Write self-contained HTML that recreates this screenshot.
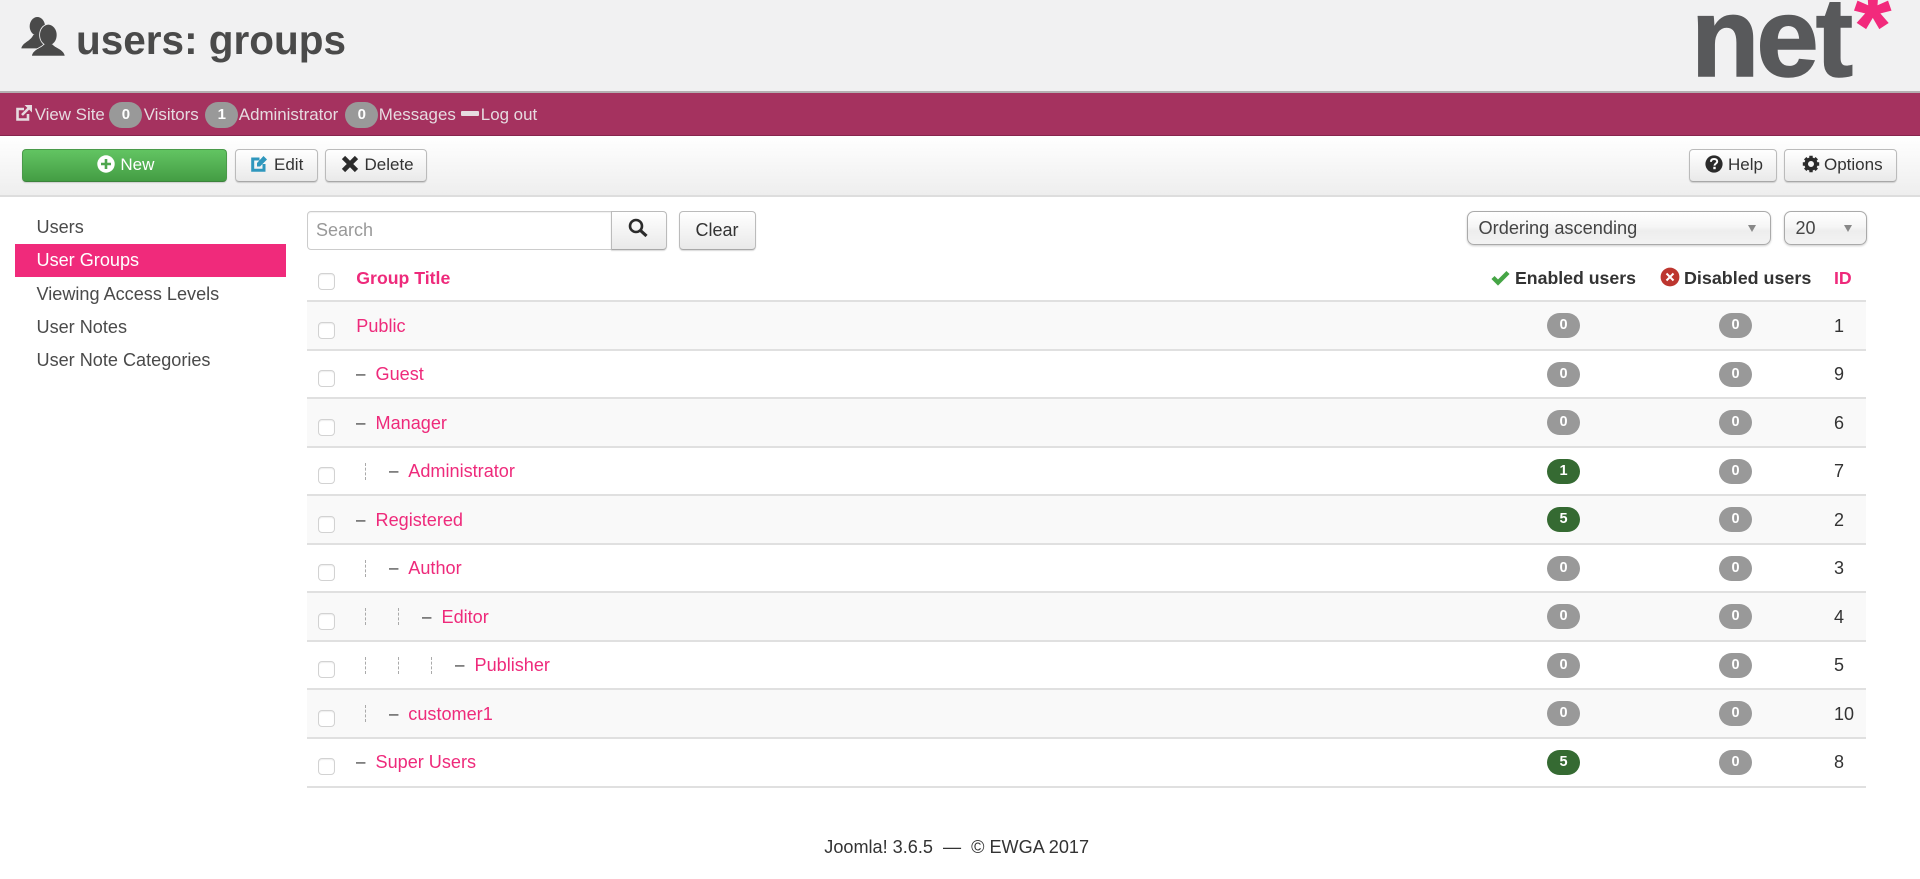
<!DOCTYPE html>
<html><head><meta charset="utf-8"><title>users: groups</title>
<style>
*{box-sizing:border-box}
html,body{margin:0;padding:0;width:1920px;height:879px;overflow:hidden;background:#fff;font-family:"Liberation Sans",sans-serif;font-size:17px;color:#333}
.a{position:absolute}
.t{position:absolute;white-space:nowrap;line-height:20px;height:20px}
#head{left:0;top:0;width:1920px;height:92px;background:#f1f1f2}
#bar{left:0;top:91px;width:1920px;height:45px;background:#a5325f;border-top:2px solid #b5b0b2;border-bottom:1px solid #87254d}
#tool{left:0;top:136px;width:1920px;height:61px;background:linear-gradient(#fff,#eee);border-bottom:2px solid #ddd}
.nb{position:absolute;top:102px;width:33px;height:26px;border-radius:13px;background:#999;color:#fff;font-weight:bold;font-size:15px;line-height:26px;text-align:center}
.nt{color:#e6dbe0;top:105px;font-size:16.9px}
.btn{position:absolute;border:1px solid #bbb;border-bottom-color:#a8a8a8;border-radius:4px;background:linear-gradient(#fff,#e9e9e9);box-shadow:0 1px 1px rgba(0,0,0,.15)}
.side{left:36.5px;color:#4a4a4a;font-size:18.1px}
.row{position:absolute;left:307px;width:1559px;height:48.5px;border-bottom:2px solid #e0e0e0}
.row.o{background:#f9f9f9}
.row .cb{position:absolute;left:11px;top:19.5px;width:16.5px;height:17px;border:1px solid #d2d2d2;border-radius:4px;background:#fff;box-shadow:inset 0 1px 1px rgba(0,0,0,.07)}
.row .b{position:absolute;top:11px;width:33px;height:25px;border-radius:12.5px;background:#999;color:#fff;font-weight:bold;font-size:14.5px;line-height:25px;text-align:center}
.row .b.g{background:#356a32}
.row .b1{left:1240px}.row .b2{left:1412px}
.row .n{position:absolute;top:13.5px;line-height:20px;color:#ee2a7b;white-space:nowrap;font-size:18.1px}
.row .d{position:absolute;top:13.5px;line-height:20px;color:#333}
.row .id{position:absolute;left:1527px;top:13.5px;line-height:20px;color:#333;font-size:18px}
.row .l{position:absolute;top:15px;height:17px;width:0;border-left:1px dashed #aaa}
.sel{position:absolute;top:211px;height:34px;border:1px solid #aaa;border-radius:7px;background:linear-gradient(#fff 0%,#f6f6f6 45%,#ededed 60%,#f3f3f3 100%);box-shadow:0 1px 2px rgba(0,0,0,.2)}
.arr{position:absolute;top:225px;width:0;height:0;border-left:4.5px solid transparent;border-right:4.5px solid transparent;border-top:7px solid #888}
svg{position:absolute;overflow:visible}
</style></head><body>
<div class="a" id="head"></div>
<svg style="left:10px;top:5px" width="100" height="70" viewBox="0 0 300 210">
<g fill="#4a4a4a"><ellipse cx="82" cy="64" rx="23" ry="28"/><path d="M34 130C38 112 60 110 70 90L94 90L104 130Z"/>
<g stroke="#f1f1f2" stroke-width="5" style="paint-order:stroke"><path d="M103 118C94 130 70 133 66 152L164 152C160 133 136 130 127 118Z"/><ellipse cx="115" cy="90" rx="25" ry="31"/></g>
<path d="M103 118C94 130 70 133 66 152L164 152C160 133 136 130 127 118Z"/></g></svg>
<div class="t" style="left:76px;top:16px;font-size:40.5px;font-weight:bold;line-height:48px;height:48px;color:#4a4a4a">users: groups</div>
<div class="t" style="left:1691px;top:-18px;font-size:112px;font-weight:bold;line-height:112px;height:112px;letter-spacing:-3px;color:#58595b;-webkit-text-stroke:1.5px #58595b">net</div>
<div class="t" style="left:1854.4px;top:-21px;font-size:94px;font-weight:bold;line-height:94px;height:94px;color:#f22a7c;-webkit-text-stroke:1px #f22a7c">*</div>

<div class="a" id="bar"></div>
<svg style="left:16px;top:105px" width="16" height="16" viewBox="0 0 16 16" fill="none" stroke="#e6dbe0" stroke-width="2.6"><path d="M8 4H1.5V14.5H12V9"/><path d="M6 10L14 2" /><path fill="#e6dbe0" stroke="none" d="M8.5 0H16V7.5Z"/></svg>
<div class="t nt" style="left:34.7px">View Site</div>
<div class="nb" style="left:109.4px">0</div>
<div class="t nt" style="left:143.7px">Visitors</div>
<div class="nb" style="left:205.3px">1</div>
<div class="t nt" style="left:238.8px">Administrator</div>
<div class="nb" style="left:345.3px">0</div>
<div class="t nt" style="left:378.8px">Messages</div>
<div class="a" style="left:461px;top:111px;width:17.5px;height:4.5px;background:#e6dbe0;border-radius:1px"></div>
<div class="t nt" style="left:480.8px">Log out</div>

<div class="a" id="tool"></div>
<div class="btn" style="left:22.4px;top:149px;width:205px;height:33px;background:linear-gradient(#62c462,#449d44);border-color:#4a9a4a #4a9a4a #3c833c"></div>
<svg style="left:97px;top:155px" width="18" height="18" viewBox="0 0 18 18"><circle cx="9" cy="9" r="8.7" fill="#fff"/><path d="M9 4V14M4 9H14" stroke="#4fa64f" stroke-width="2.6"/></svg>
<div class="t" style="left:120.4px;top:155px;color:#fff">New</div>
<div class="btn" style="left:234.7px;top:149px;width:83px;height:33px"></div>
<svg style="left:251px;top:155px" width="17" height="17" viewBox="0 0 17 17"><path d="M8.5 4H1.7V15.3H13V9" fill="none" stroke="#2f97bd" stroke-width="3"/><path d="M6 8L12.5 1L16 4.5L9 11.5H6Z" fill="#2f97bd"/></svg>
<div class="t" style="left:274px;top:155px">Edit</div>
<div class="btn" style="left:325px;top:149px;width:102px;height:33px"></div>
<svg style="left:341px;top:155px" width="18" height="18" viewBox="0 0 18 18"><path d="M2.5 2.5L15.5 15.5M15.5 2.5L2.5 15.5" stroke="#2b2b2b" stroke-width="4.6"/></svg>
<div class="t" style="left:364.5px;top:155px">Delete</div>
<div class="btn" style="left:1688.7px;top:149px;width:88px;height:33px"></div>
<svg style="left:1705px;top:155px" width="18" height="18" viewBox="0 0 18 18"><circle cx="9" cy="9" r="8.6" fill="#2b2b2b"/><path d="M5.9 6.8C6 4.9 7.3 4 9.1 4C11 4 12.2 5 12.2 6.6C12.2 8.6 9.5 8.6 9.5 10.6" fill="none" stroke="#fff" stroke-width="2"/><rect x="8.3" y="11.8" width="2.4" height="2.4" fill="#fff"/></svg>
<div class="t" style="left:1728px;top:155px">Help</div>
<div class="btn" style="left:1784px;top:149px;width:113px;height:33px"></div>
<svg style="left:1801.5px;top:155px" width="18" height="18" viewBox="0 0 18 18"><circle cx="9" cy="9" r="4.8" fill="none" stroke="#2b2b2b" stroke-width="3.6"/><path d="M9 0.8V17.2M0.8 9H17.2M3.2 3.2L14.8 14.8M14.8 3.2L3.2 14.8" stroke="#2b2b2b" stroke-width="3.4" stroke-dasharray="3.6 9.2" /></svg>
<div class="t" style="left:1824px;top:155px">Options</div>

<div class="t side" style="top:217px">Users</div>
<div class="a" style="left:15px;top:244px;width:271px;height:33px;background:#f02a7b"></div>
<div class="t side" style="top:250px;color:#fff">User Groups</div>
<div class="t side" style="top:284px">Viewing Access Levels</div>
<div class="t side" style="top:317px">User Notes</div>
<div class="t side" style="top:350px">User Note Categories</div>

<div class="a" style="left:307px;top:211px;width:305px;height:38.5px;border:1px solid #ccc;border-radius:4px 0 0 4px;background:#fff;box-shadow:inset 0 1px 1px rgba(0,0,0,.06)"></div>
<div class="t" style="left:316px;top:220px;color:#999;font-size:18px">Search</div>
<div class="btn" style="left:611px;top:211px;width:55.5px;height:38.5px;border-radius:0 4px 4px 0"></div>
<svg style="left:627px;top:217px" width="22" height="22" viewBox="0 0 22 22"><circle cx="9" cy="9" r="6" fill="none" stroke="#2b2b2b" stroke-width="2.6"/><path d="M13.5 13.5L19.5 19" stroke="#2b2b2b" stroke-width="3.2"/></svg>
<div class="btn" style="left:678.7px;top:211px;width:77px;height:38.5px"></div>
<div class="t" style="left:695.5px;top:220px;font-size:18px">Clear</div>

<div class="sel" style="left:1467px;width:304px"></div>
<div class="t" style="left:1478.5px;top:218px;color:#444;font-size:18.2px">Ordering ascending</div>
<div class="arr" style="left:1747.5px"></div>
<div class="sel" style="left:1784px;width:83px"></div>
<div class="t" style="left:1795.5px;top:218px;color:#444;font-size:18px">20</div>
<div class="arr" style="left:1843.5px"></div>

<div class="row" style="top:253.5px;height:48.5px;background:none"><div class="cb" style="top:19px"></div></div>
<div class="t" style="left:356.3px;top:268px;font-weight:bold;color:#ee2a7b;font-size:17.7px">Group Title</div>
<svg style="left:1490.5px;top:270px" width="19" height="15" viewBox="0 0 19 15"><path d="M2 7.5L7 12.5L17 2.5" fill="none" stroke="#46a546" stroke-width="4.4"/></svg>
<div class="t" style="left:1515px;top:268px;font-weight:bold;font-size:17.7px">Enabled users</div>
<svg style="left:1659.5px;top:267px" width="20" height="20" viewBox="0 0 20 20"><circle cx="10" cy="10" r="9.4" fill="#bd362f"/><path d="M6.5 6.5L13.5 13.5M13.5 6.5L6.5 13.5" stroke="#fff" stroke-width="2"/></svg>
<div class="t" style="left:1684px;top:268px;font-weight:bold;font-size:17.9px">Disabled users</div>
<div class="t" style="left:1834px;top:268px;font-weight:bold;color:#ee2a7b;font-size:17.7px">ID</div>

<div class="row o" style="top:302px"><div class="cb"></div><span class="n" style="left:49.3px">Public</span><div class="b b1">0</div><div class="b b2">0</div><span class="id">1</span></div>
<div class="row" style="top:350.5px"><div class="cb"></div><span class="d" style="left:49px">–</span><span class="n" style="left:68.5px">Guest</span><div class="b b1">0</div><div class="b b2">0</div><span class="id">9</span></div>
<div class="row o" style="top:399px"><div class="cb"></div><span class="d" style="left:49px">–</span><span class="n" style="left:68.5px">Manager</span><div class="b b1">0</div><div class="b b2">0</div><span class="id">6</span></div>
<div class="row" style="top:447.5px"><div class="cb"></div><i class="l" style="left:58px"></i><span class="d" style="left:82px">–</span><span class="n" style="left:101.3px">Administrator</span><div class="b b1 g">1</div><div class="b b2">0</div><span class="id">7</span></div>
<div class="row o" style="top:496px"><div class="cb"></div><span class="d" style="left:49px">–</span><span class="n" style="left:68.5px">Registered</span><div class="b b1 g">5</div><div class="b b2">0</div><span class="id">2</span></div>
<div class="row" style="top:544.5px"><div class="cb"></div><i class="l" style="left:58px"></i><span class="d" style="left:82px">–</span><span class="n" style="left:101.3px">Author</span><div class="b b1">0</div><div class="b b2">0</div><span class="id">3</span></div>
<div class="row o" style="top:593px"><div class="cb"></div><i class="l" style="left:58px"></i><i class="l" style="left:91px"></i><span class="d" style="left:115px">–</span><span class="n" style="left:134.5px">Editor</span><div class="b b1">0</div><div class="b b2">0</div><span class="id">4</span></div>
<div class="row" style="top:641.5px"><div class="cb"></div><i class="l" style="left:58px"></i><i class="l" style="left:91px"></i><i class="l" style="left:124px"></i><span class="d" style="left:148px">–</span><span class="n" style="left:167.5px">Publisher</span><div class="b b1">0</div><div class="b b2">0</div><span class="id">5</span></div>
<div class="row o" style="top:690px"><div class="cb"></div><i class="l" style="left:58px"></i><span class="d" style="left:82px">–</span><span class="n" style="left:101.3px">customer1</span><div class="b b1">0</div><div class="b b2">0</div><span class="id">10</span></div>
<div class="row" style="top:738.5px;height:49px"><div class="cb"></div><span class="d" style="left:49px">–</span><span class="n" style="left:68.5px">Super Users</span><div class="b b1 g">5</div><div class="b b2">0</div><span class="id">8</span></div>

<div class="t" style="left:824.3px;top:837px;white-space:pre;font-size:18.1px">Joomla! 3.6.5  —  © EWGA 2017</div>
</body></html>
